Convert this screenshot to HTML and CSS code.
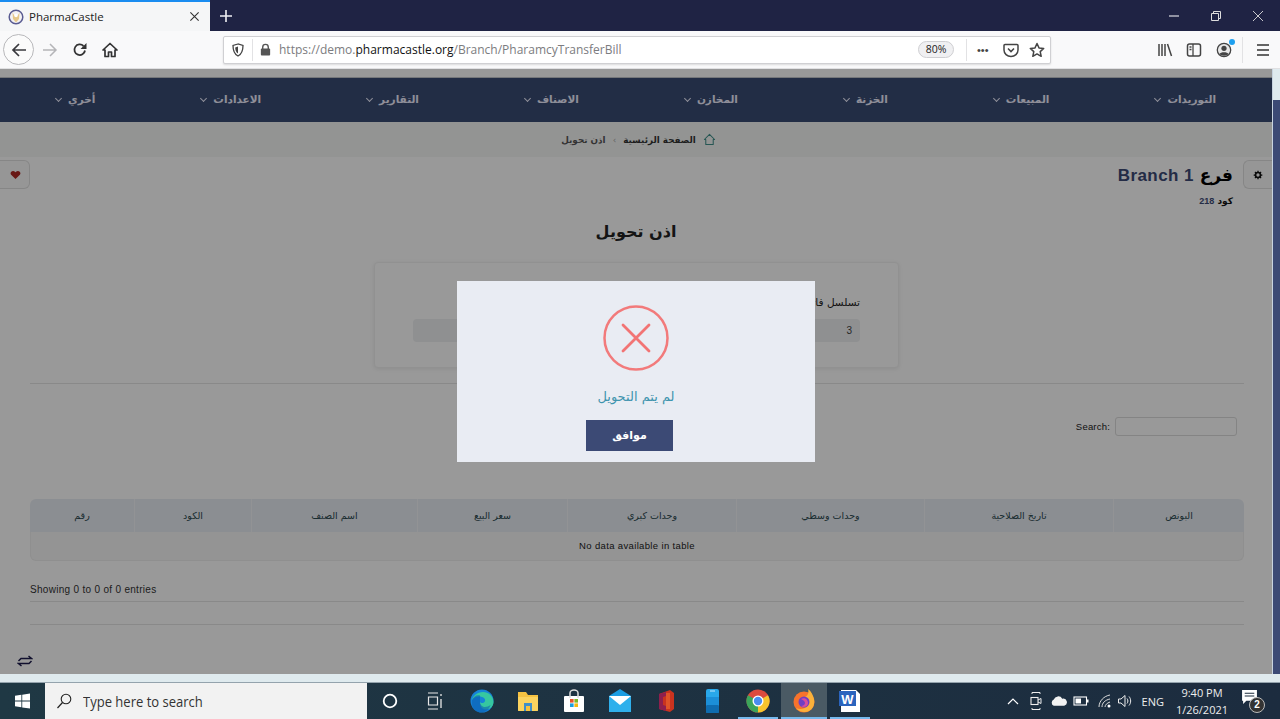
FILE: index.html
```html
<!DOCTYPE html>
<html lang="ar">
<head>
<meta charset="utf-8">
<title>PharmaCastle</title>
<link rel="stylesheet" href="styles.css">
</head>
<body>
<header class="tabbar">
  <div class="tab">
    <svg class="favicon" viewBox="0 0 16 16"><circle cx="8" cy="8" r="6.800" fill="#f4f2f4" stroke="#5a5c92" stroke-width="1.500"/><path d="M4.500 3.500 6 6h4l1.500-2.500-.5 6.500L8 13.500 5 10z" fill="#e6c88a"/><circle cx="8" cy="6.500" r="1.800" fill="#fff"/></svg>
    <span class="tab-title">PharmaCastle</span>
    <svg class="tab-close" viewBox="0 0 12 12"><path d="M1.500 1.500l9 9M10.500 1.500l-9 9" stroke="#333" stroke-width="1.200"/></svg>
  </div>
  <svg class="new-tab" viewBox="0 0 14 14"><path d="M7 1v12M1 7h12" stroke="#f0f0f4" stroke-width="1.600"/></svg>
  <div class="win-controls">
    <svg class="win-btn" viewBox="0 0 12 12"><path d="M1 6h10" stroke="#fff" stroke-width="1"/></svg>
    <svg class="win-btn" viewBox="0 0 12 12"><path d="M1.500 3.500h7v7h-7zM3.500 3.500v-2h7v7h-2" fill="none" stroke="#ddd" stroke-width="1"/></svg>
    <svg class="win-btn" viewBox="0 0 12 12"><path d="M1 1l10 10M11 1L1 11" stroke="#ddd" stroke-width=".9"/></svg>
  </div>
</header>

<nav class="toolbar">
  <div class="nav-buttons">
    <div class="back"><svg class="ico16" viewBox="0 0 16 16"><path d="M15 8H2M8 2 2 8l6 6" fill="none" stroke="#3a3a3e" stroke-width="1.700"/></svg></div>
    <svg class="ico16 forward" viewBox="0 0 16 16"><path d="M1 8h13M8 2l6 6-6 6" fill="none" stroke="#b5b5b8" stroke-width="1.500"/></svg>
    <svg class="ico16 reload" viewBox="0 0 16 16"><path d="M13 8.500A5.300 5.300 0 1 1 11.500 4" fill="none" stroke="#333" stroke-width="1.800"/><path d="M14.500 1v6h-6z" fill="#333"/></svg>
    <svg class="ico16 home" viewBox="0 0 16 16"><path d="M8 1.500 1 8h2v6.500h3.500V10h3v4.500H13V8h2z" fill="none" stroke="#333" stroke-width="1.700" stroke-linejoin="round"/></svg>
  </div>
  <div class="urlbar">
    <svg class="shield" viewBox="0 0 14 14"><path d="M7 1 2 2.500c0 5 1 8.500 5 10.500 4-2 5-5.500 5-10.500z" fill="none" stroke="#444" stroke-width="1.300"/><path d="M7 3.500v7c-2-1-2.800-3.500-2.800-6z" fill="#444"/></svg>
    <span class="url-sep"></span>
    <svg class="lock" viewBox="0 0 14 14"><path d="M4 6.500V4.500a3 3 0 0 1 6 0v2" fill="none" stroke="#555" stroke-width="1.500"/><rect x="2" y="6" width="10" height="7.500" rx="1" fill="#555"/></svg>
    <span class="url"><span class="url-dim">https://demo.</span><span class="url-host">pharmacastle.org</span><span class="url-dim">/Branch/PharamcyTransferBill</span></span>
    <span class="zoom-pill">80%</span>
    <span class="url-sep sep-wide"></span>
    <span class="dots">•••</span>
    <svg class="pocket" viewBox="0 0 16 16"><path d="M2 2.500h12a1 1 0 0 1 1 1V8a7 6.500 0 0 1-14 0V3.500a1 1 0 0 1 1-1z" fill="none" stroke="#444" stroke-width="1.500"/><path d="m5 6.500 3 3 3-3" fill="none" stroke="#444" stroke-width="1.600"/></svg>
    <svg class="star" viewBox="0 0 16 16"><path d="m8 1.500 2 4.400 4.700.5-3.500 3.200 1 4.700L8 11.900l-4.200 2.400 1-4.700-3.500-3.200 4.700-.5z" fill="none" stroke="#444" stroke-width="1.500" stroke-linejoin="round"/></svg>
  </div>
  <div class="tools">
    <svg class="ico16 t-lib" viewBox="0 0 16 16"><path d="M2 2v12M5 2v12M8 2v12M10.500 2l4 12" stroke="#444" stroke-width="1.500" fill="none"/></svg>
    <svg class="ico16 t-side" viewBox="0 0 16 16"><rect x="1.500" y="2" width="13" height="12" rx="2" fill="none" stroke="#444" stroke-width="1.500"/><path d="M7 2v12M3.500 5H5.500M3.500 7.500H5.500" stroke="#444" stroke-width="1.300"/></svg>
    <div class="t-avatar">
      <svg class="ico16" viewBox="0 0 16 16"><circle cx="8" cy="8" r="6.700" fill="#e8e8e8" stroke="#444" stroke-width="1.300"/><circle cx="8" cy="6.300" r="2.600" fill="#444"/><path d="M3.500 12c1-2.500 8-2.500 9 0-2 2.300-7 2.300-9 0z" fill="#444"/></svg>
      <span class="notif-dot"></span>
    </div>
    <span class="tool-sep"></span>
    <svg class="ico16 t-menu" viewBox="0 0 16 16"><path d="M2 3h12M2 8h12M2 13h12" stroke="#333" stroke-width="1.500"/></svg>
  </div>
</nav>

<div class="viewport">
  <main class="page" dir="rtl">
    <div class="menu">
      <span class="menu-item">التوريدات<i class="chev"></i></span>
      <span class="menu-item">المبيعات<i class="chev"></i></span>
      <span class="menu-item">الخزنة<i class="chev"></i></span>
      <span class="menu-item">المخازن<i class="chev"></i></span>
      <span class="menu-item">الاصناف<i class="chev"></i></span>
      <span class="menu-item">التقارير<i class="chev"></i></span>
      <span class="menu-item">الاعدادات<i class="chev"></i></span>
      <span class="menu-item">أخري<i class="chev"></i></span>
    </div>
    <div class="crumbs">
      <svg class="crumb-home" viewBox="0 0 14 14"><path d="M7 1.500 1.500 7H3v5.500h8V7h1.500z" fill="none" stroke="#3f8f8a" stroke-width="1.100" stroke-linejoin="round"/></svg>
      <span class="crumb-main">الصفحة الرئيسية</span>
      <span class="crumb-sep">›</span>
      <span class="crumb-cur">اذن تحويل</span>
    </div>
    <div class="head-row">
      <button class="gear-btn"><svg class="gear" viewBox="0 0 12 12"><circle cx="6" cy="6" r="3" fill="none" stroke="#111" stroke-width="2"/><path d="M6 .8v2M6 9.200v2M.8 6h2M9.200 6h2M2.300 2.300l1.400 1.400M8.300 8.300l1.400 1.400M9.700 2.300 8.300 3.700M3.700 8.300 2.300 9.700" stroke="#111" stroke-width="1.500"/></svg></button>
      <div class="branch">
        <h1 class="branch-title">فرع <span class="branch-name">Branch 1</span></h1>
        <div class="branch-code">كود <span class="code-num">218</span></div>
      </div>
      <button class="heart-btn"><svg class="heart" viewBox="0 0 12 12"><path d="M6 11 1.200 6.200C-.8 3.800 2.800.4 6 3.500 9.200.4 12.800 3.800 10.800 6.200z" fill="#b02a25"/></svg></button>
    </div>
    <h2 class="doc-title">اذن تحويل</h2>
    <section class="card">
      <div class="field">
        <label class="field-label">تسلسل فاتورة التحويل</label>
        <div class="field-input">3</div>
      </div>
      <div class="field">
        <label class="field-label">التاريخ</label>
        <div class="field-input"></div>
      </div>
    </section>
    <div class="content">
      <hr class="rule rule-first">
      <div class="search-row" dir="ltr">
        <label class="search-label">Search:</label>
        <span class="search-input"></span>
      </div>
      <table class="data">
        <colgroup>
          <col class="c1"><col class="c2"><col class="c3"><col class="c4"><col class="c5"><col class="c6"><col class="c7"><col class="c8">
        </colgroup>
        <thead>
          <tr><th>البونص</th><th>تاريخ الصلاحية</th><th>وحدات وسطي</th><th>وحدات كبري</th><th>سعر البيع</th><th>اسم الصنف</th><th>الكود</th><th>رقم</th></tr>
        </thead>
        <tbody>
          <tr><td colspan="8" dir="ltr">No data available in table</td></tr>
        </tbody>
      </table>
      <div class="info" dir="ltr">Showing 0 to 0 of 0 entries</div>
      <hr class="rule rule-a">
      <hr class="rule rule-b">
      <div class="foot-icon" dir="ltr">
        <svg class="swap" viewBox="0 0 16 12"><path d="M1.500 6 4 3.500h10.500L11.500 1M14.500 6 12 8.500H1.500L4.500 11" fill="none" stroke="#1d1c4d" stroke-width="1.500"/></svg>
      </div>
    </div>
    <div class="overlay">
      <div class="modal">
        <svg class="err" viewBox="0 0 66 66"><circle cx="33" cy="33" r="31.500" fill="none" stroke="#f27474" stroke-width="2.500" opacity=".95"/><path d="M20 20l26 26M46 20 20 46" stroke="#f27474" stroke-width="2.800" stroke-linecap="round"/></svg>
        <p class="modal-text">لم يتم التحويل</p>
        <button class="modal-btn">موافق</button>
      </div>
    </div>
  </main>
  <aside class="scrollbar"><div class="thumb"></div></aside>
</div>

<div class="strip"></div>

<footer class="taskbar">
  <div class="start"><svg class="winlogo" viewBox="0 0 16 16"><path d="M0 2.300 6.800 1.300V7.500H0zM7.700 1.200 16 0v7.500H7.700zM0 8.400h6.800v6.300L0 13.700zM7.700 8.400H16V16l-8.300-1.200z" fill="#fff"/></svg></div>
  <div class="searchbox">
    <svg class="mag" viewBox="0 0 16 16"><circle cx="10" cy="6" r="4.800" fill="none" stroke="#222" stroke-width="1.100"/><path d="M6.500 9.500 1.500 15" stroke="#222" stroke-width="1.200"/></svg>
    <span class="search-ph">Type here to search</span>
  </div>
  <div class="task-icon"><svg class="ti" viewBox="0 0 22 22"><circle cx="11" cy="11" r="6.300" fill="none" stroke="#fff" stroke-width="1.800"/></svg></div>
  <div class="task-icon taskview"><svg class="ti" viewBox="0 0 22 22"><path d="M5 3h10M5 19h10M5.500 7h9v8h-9z" fill="none" stroke="#e8e8e8" stroke-width="1.200"/><path d="M18 4v2M18 9v9" stroke="#e8e8e8" stroke-width="1.300"/></svg></div>
  <div class="task-icon"><svg class="tl" viewBox="0 0 24 24"><circle cx="12" cy="12" r="11.500" fill="#1683d8"/><path d="M23.500 13c0-6-5-10-10.500-10C7 3 3 7 2 11c3-4 9-4.500 12-2 1.500 1.200 1.500 3.500 0 4.500-2 1-4 .5-4-1-.5 4 1.500 8 6 8 4 0 7.500-3 7.500-7.500z" fill="#36c7a0"/><path d="M10 12.500c0 3 2 5.500 5 5.500 2 0 4-.7 5.500-2-1 4-5 7.500-9.500 7.500-6 0-10-5-9-12 1-4 5-6 8-5" fill="#0c5fb0" opacity=".6"/></svg></div>
  <div class="task-icon"><svg class="tl" viewBox="0 0 24 24"><path d="M2 3h8l2 3h10v15a1 1 0 0 1-1 1H3a1 1 0 0 1-1-1z" fill="#f5c242"/><path d="M2 8h20v13a1 1 0 0 1-1 1H3a1 1 0 0 1-1-1z" fill="#fbd35f"/><rect x="8" y="14" width="8" height="8" fill="#3f8fc9"/><rect x="10" y="17" width="4" height="5" fill="#f5c242"/></svg></div>
  <div class="task-icon"><svg class="tl" viewBox="0 0 24 24"><rect x="2" y="7" width="20" height="16" rx="1" fill="#fff"/><path d="M8 9V4a4 3 0 0 1 8 0v5" fill="none" stroke="#ddd" stroke-width="1.500"/><rect x="8" y="10" width="3.600" height="3.600" fill="#e8542c"/><rect x="12.400" y="10" width="3.600" height="3.600" fill="#7db928"/><rect x="8" y="14.400" width="3.600" height="3.600" fill="#1c9fe0"/><rect x="12.400" y="14.400" width="3.600" height="3.600" fill="#f7b90f"/></svg></div>
  <div class="task-icon"><svg class="tl" viewBox="0 0 24 24"><path d="M1 7 12 0l11 7v16H1z" fill="#1b9de2"/><path d="M1 7h22v16H1z" fill="#2fb0ec"/><path d="M1 7l11 9 11-9z" fill="#fff"/></svg></div>
  <div class="task-icon"><svg class="tl" viewBox="0 0 24 24"><path d="M5 5 16 1l4 3v16l-4 3-11-3z" fill="#c9331f"/><path d="M5 5l7-2v4L9 8v8l3 1v5l-7-2z" fill="#8e1f4d"/><path d="M12 4h4v16h-4z" fill="#e8612c" opacity=".7"/></svg></div>
  <div class="task-icon"><svg class="tl" viewBox="0 0 24 24"><rect x="6" y="0" width="13" height="24" rx="2" fill="#29a8ea"/><rect x="6" y="16" width="13" height="8" rx="1" fill="#0f6cb0"/><rect x="6" y="8" width="13" height="8" fill="#1c8fd8"/><rect x="10" y="1.500" width="5" height="1" fill="#bfe6fb"/></svg></div>
  <div class="task-icon running"><svg class="tl" viewBox="0 0 24 24"><circle cx="12" cy="12" r="11.500" fill="#dd4b3e"/><path d="M12 12 22 6.200A11.500 11.500 0 0 1 12 23.500z" fill="#f7c42e"/><path d="M12 12 12 23.500A11.500 11.500 0 0 1 2 6.200z" fill="#3ba55a"/><circle cx="12" cy="12" r="5.500" fill="#fff"/><circle cx="12" cy="12" r="4.200" fill="#4a8df0"/></svg></div>
  <div class="task-icon running active"><svg class="tl" viewBox="0 0 24 24"><circle cx="12" cy="13" r="10.500" fill="#f7732c"/><path d="M22 10c1 5-1 10-5 12-4 2-10 1-13-3 4 2 9 1 11-2 2-3 1-7-2-9 3-1 4-5 3-8 3 2 5 6 6 10z" fill="#fbb13a"/><circle cx="12" cy="13" r="5.500" fill="#6e3fc4"/><path d="M9 10c3-2 7 0 7 4s-5 5-7 3c2 0 4-1 4-3s-2-3-4-4z" fill="#d84d9c"/></svg></div>
  <div class="task-icon running"><svg class="tl" viewBox="0 0 24 24"><path d="M3 1h15l4 4v18H3z" fill="#fff"/><rect x="1" y="2" width="17" height="15" fill="#2b64bd"/><text class="word-w" x="9.500" y="14.500" text-anchor="middle">W</text></svg></div>
  <div class="tray">
    <svg class="i-chev" viewBox="0 0 14 14"><path d="m2 10 5-5 5 5" fill="none" stroke="#fff" stroke-width="1.200"/></svg>
    <svg class="i-meet" viewBox="0 0 14 20"><path d="M3 3V1.500h8V3M3 17v1.500h8V17" fill="none" stroke="#eee" stroke-width="1"/><rect x="2" y="6.500" width="7" height="7" fill="none" stroke="#eee" stroke-width="1.100"/><path d="m9 9 3-1.500v5L9 11" fill="none" stroke="#eee"/></svg>
    <svg class="i-cloud" viewBox="0 0 18 12"><path d="M4 11a3.500 3.500 0 0 1 0-6.500A5 5 0 0 1 13 3.500 3.800 3.800 0 0 1 15 11z" fill="#f2f2f2"/></svg>
    <svg class="i-batt" viewBox="0 0 16 12"><rect x="1" y="2" width="12.500" height="8" fill="none" stroke="#fff" stroke-width="1.100"/><rect x="2.500" y="3.500" width="5.500" height="5" fill="#fff"/><rect x="14" y="4.500" width="1.500" height="3" fill="#fff"/></svg>
    <svg class="i-wifi" viewBox="0 0 16 16"><path d="M2 14C2 8 7 3 13 2M5 14c0-4 3-7 8-8M8 14c0-2 2-4 5-5" fill="none" stroke="#ddd" stroke-width="1"/><circle cx="12" cy="13" r="1.500" fill="#fff"/></svg>
    <svg class="i-vol" viewBox="0 0 16 16"><path d="M1.500 6v4H4l4 3.500v-11L4 6z" fill="none" stroke="#eee"/><path d="M10 5.500c1.200 1.500 1.200 3.500 0 5M12 3.500c2.200 2.500 2.200 6.500 0 9" fill="none" stroke="#eee"/></svg>
    <span class="lang">ENG</span>
    <div class="clock"><span>9:40 PM</span><span>1/26/2021</span></div>
    <div class="notif">
      <svg class="notif-ico" viewBox="0 0 16 16"><path d="M1 1h14v10H5l-3 3v-3H1z" fill="#fff"/><path d="M3.500 4h9M3.500 6.500h9" stroke="#1c2c3c"/></svg>
      <span class="notif-badge">2</span>
    </div>
  </div>
</footer>
</body>
</html>
```

FILE: styles.css
```css
* { box-sizing: border-box; }
html, body { margin: 0; padding: 0; }
body {
  width: 1280px;
  height: 719px;
  overflow: hidden;
  display: flex;
  flex-direction: column;
  font-family: "DejaVu Sans", "Liberation Sans", sans-serif;
  background: #fff;
}
svg { display: block; flex: none; }

/* Browser chrome */
.tabbar { height: 31px; flex: none; display: flex; align-items: center; background: #1f2344; }
.tab {
  width: 210px; height: 31px; background: #f5f6f7; border-top: 2px solid #1a8cf0;
  display: flex; align-items: center; padding: 0 10px 0 8px;
}
.favicon { width: 16px; height: 16px; }
.tab-title { font: 11.500px "Open Sans", sans-serif; color: #222; margin-left: 5px; flex: 1; }
.tab-close { width: 11px; height: 11px; }
.new-tab { width: 14px; height: 14px; margin-left: 9px; }
.win-controls { margin-left: auto; display: flex; gap: 30px; padding-right: 16px; }
.win-btn { width: 12px; height: 12px; }

.toolbar { height: 38px; flex: none; background: #f9f9fa; display: flex; align-items: center; border-bottom: 1px solid #e0e0e2; }
.nav-buttons { display: flex; align-items: center; width: 223px; padding-left: 3px; flex: none; }
.back {
  width: 31px; height: 31px; border-radius: 50%; border: 1px solid #b8b8bb; background: #fbfbfb;
  display: flex; align-items: center; justify-content: center;
}
.ico16 { width: 16px; height: 16px; }
.forward { margin-left: 8px; }
.reload { margin-left: 14px; }
.home { margin-left: 14px; }
.urlbar {
  width: 828px; height: 28px; background: #fff; border: 1px solid #d0d0d3; border-radius: 2px;
  display: flex; align-items: center; padding: 0 5px 0 7px; box-shadow: 0 1px 2px rgba(0,0,0,.12);
}
.shield { width: 14px; height: 14px; }
.url-sep { width: 1px; height: 22px; background: #e2e2e4; margin-left: 7px; }
.lock { width: 13px; height: 13px; margin-left: 6px; }
.url { font: 12px "Open Sans", sans-serif; margin-left: 7px; flex: 1; white-space: nowrap; }
.url-dim { color: #7c7c80; }
.url-host { color: #111; }
.zoom-pill {
  width: 36px; height: 17px; border: 1px solid #cfcfd2; border-radius: 9px; background: #f0f0f2;
  font: 10.500px/15px "Open Sans", sans-serif; color: #222; text-align: center;
}
.sep-wide { margin-left: 12px; }
.dots { font: 11px "Liberation Sans", sans-serif; color: #444; margin-left: 10px; width: 19px; white-space: nowrap; }
.pocket { width: 16px; height: 16px; margin-left: 7px; }
.star { width: 16px; height: 16px; margin-left: 10px; }
.tools { display: flex; align-items: center; margin-left: 106px; }
.t-side { margin-left: 13px; }
.t-avatar { position: relative; margin-left: 14px; }
.notif-dot { position: absolute; right: -3px; top: -3px; width: 6px; height: 6px; border-radius: 50%; background: #1ea0f0; }
.tool-sep { width: 1px; height: 26px; background: #e2e2e4; margin-left: 10px; }
.t-menu { margin-left: 12px; }

/* Page */
.viewport { height: 605px; flex: none; display: flex; }
.page { width: 1272px; height: 605px; position: relative; overflow: hidden; background: #fff; padding-top: 8px; }
.scrollbar { width: 8px; background: #dfeaee; padding-top: 31px; border-left: 1px solid #c8d4e0; }
.thumb { height: 574px; background: #3c4a75; }

.menu {
  height: 45px; background: #394b73; display: flex; justify-content: space-between; align-items: center;
  padding: 0 56px 2px; border-top: 1px solid #c3c6cc;
}
.menu-item { font-size: 10.500px; font-weight: 700; color: #eef; white-space: nowrap; display: flex; align-items: center; gap: 5px; }
.chev { width: 5px; height: 5px; border-right: 1.500px solid #eef; border-bottom: 1.500px solid #eef; transform: rotate(45deg); margin-top: -2px; margin-right: 2px; }

.crumbs { height: 35px; background: #f5f7f5; display: flex; align-items: center; justify-content: center; font-size: 8.800px; padding-left: 5px; }
.crumb-home { width: 13px; height: 13px; margin-left: 7px; }
.crumb-main { font-weight: 700; color: #333; }
.crumb-sep { color: #aaa; margin: 0 7px; }
.crumb-cur { color: #555; font-weight: 700; }

.head-row { display: flex; align-items: flex-start; height: 60px; padding-top: 3px; }
.gear-btn {
  width: 29px; height: 29px; padding: 0; background: #fafafa; border: 1px solid #e0e0e0; border-right: 0;
  border-radius: 6px 0 0 6px; display: flex; align-items: center; justify-content: center;
}
.gear { width: 10px; height: 10px; }
.branch { margin-right: 10px; flex: 1; }
.branch-title { margin: 2px 0 0; font-size: 17px; line-height: 26px; font-weight: 700; color: #000; }
.branch-name { font-family: "Liberation Sans", sans-serif; color: #3c4a75; letter-spacing: .4px; }
.branch-code { font-size: 9px; font-weight: 700; margin-top: 7px; color: #111; }
.code-num { color: #3c4a75; font-family: "Liberation Sans", sans-serif; }
.heart-btn {
  width: 30px; height: 29px; padding: 0 0 0 2px; background: #fafafa; border: 1px solid #e0e0e0; border-left: 0;
  border-radius: 0 6px 6px 0; display: flex; align-items: center; justify-content: center;
}
.heart { width: 11px; height: 11px; }

.doc-title { margin: 0; height: 30px; font-size: 16px; line-height: 30px; text-align: center; font-weight: 700; color: #222; }

.card {
  margin: 15px 373px 0 0; width: 525px; height: 106px; background: #fff; border: 1px solid #f2f2f2; border-radius: 4px;
  box-shadow: 0 1px 4px rgba(0,0,0,.08); padding: 30px 38px 0; display: grid; grid-template-columns: 1fr 1fr; gap: 20px;
}
.field-label { display: block; font-size: 10.500px; line-height: 18px; color: #222; }
.field-input { height: 23px; margin-top: 8px; background: #eef0f2; border-radius: 4px; padding: 0 8px; font: 10px/23px "Liberation Sans", sans-serif; color: #444; }

.content { padding: 0 28px 0 30px; }
.rule { border: 0; border-top: 1px solid #e4e4e4; margin: 0; }
.rule-first { margin-top: 15px; }
.search-row { display: flex; justify-content: flex-end; align-items: center; margin-top: 33px; padding-right: 7px; height: 19px; }
.search-label { font: 9.500px "Liberation Sans", sans-serif; letter-spacing: .2px; color: #222; margin-right: 5px; }
.search-input { width: 122px; height: 19px; border: 1px solid #dcdcdc; border-radius: 3px; background: #fff; }
.data { width: 1214px; margin-top: 63px; table-layout: fixed; border-collapse: separate; border-spacing: 0; }
.c1 { width: 131px; } .c2 { width: 189px; } .c3 { width: 188px; } .c4 { width: 169px; }
.c5 { width: 150px; } .c6 { width: 166px; } .c7 { width: 117px; } .c8 { width: 104px; }
.data th {
  height: 33px; padding: 0; background: #e8edf4; font-size: 9.500px; font-weight: 400; color: #2c4a50;
  border-left: 1px solid #f4f5f8; text-align: center;
}
.data th:first-child { border-radius: 0 6px 0 0; }
.data th:last-child { border-radius: 6px 0 0 0; border-left: 0; }
.data td {
  height: 29px; padding: 0 0 2px; background: #f7f7f7; font: 9.500px "Liberation Sans", sans-serif; letter-spacing: .35px; text-align: center; color: #222;
  border-radius: 0 0 6px 6px; border: 1px solid #eee; border-top: 0;
}
.info { font: 10px/16px "Liberation Sans", sans-serif; letter-spacing: .3px; color: #333; margin-top: 21px; }
.rule-a { margin-top: 3px; }
.rule-b { margin-top: 22px; }
.foot-icon { margin-top: 30px; margin-left: -13px; }
.swap { width: 16px; height: 12px; }

.overlay { position: absolute; inset: 0; background: rgba(0,0,0,.4); display: flex; align-items: flex-start; justify-content: flex-start; }
.modal {
  width: 358px; height: 181px; background: #e9ecf3; margin: 212px 457px 0 0;
  display: flex; flex-direction: column; align-items: center; padding-top: 24px;
}
.err { width: 66px; height: 66px; }
.modal-text { margin: 16px 0 0; font-size: 13px; line-height: 20px; color: #3f94ae; }
.modal-btn {
  margin: 13px 13px 0 0; width: 87px; height: 31px; border: 0; padding: 0; background: #3c4a75; color: #fff;
  font: 700 11px "DejaVu Sans", sans-serif;
}

/* Taskbar */
.strip { height: 8px; flex: none; background: #dfeaee; }
.taskbar { height: 37px; flex: none; display: flex; align-items: stretch; background: linear-gradient(90deg, #1f3844, #1c2c3f); border-top: 1px solid #94a3ad; }
.start { width: 45px; display: flex; align-items: center; justify-content: center; }
.winlogo { width: 15px; height: 16px; }
.searchbox { width: 322px; background: #f2f2f2; display: flex; align-items: center; padding-left: 11px; }
.mag { width: 16px; height: 16px; }
.search-ph { font: 14px "Open Sans", sans-serif; color: #333; margin-left: 11px; transform: scaleX(.93); transform-origin: left; }
.task-icon { width: 46px; display: flex; align-items: center; justify-content: center; position: relative; }
.taskview { padding-right: 4px; }
.ti { width: 22px; height: 22px; }
.tl { width: 24px; height: 24px; }
.running::after { content: ""; position: absolute; left: 3px; right: 3px; bottom: 0; height: 2px; background: #76b9ed; }
.active { background: #4a5a64; }
.active::after { left: 0; right: 0; }
.word-w { font: 700 13px "Liberation Sans", sans-serif; fill: #fff; }
.tray { margin-left: auto; display: flex; align-items: center; color: #eee; padding-right: 15px; }
.i-chev { width: 14px; height: 14px; margin-right: 9px; }
.i-meet { width: 14px; height: 20px; margin-right: 7px; }
.i-cloud { width: 17px; height: 12px; margin-right: 6px; }
.i-batt { width: 16px; height: 12px; margin-right: 8px; }
.i-wifi { width: 16px; height: 16px; margin-right: 4px; }
.i-vol { width: 16px; height: 16px; margin-right: 9px; }
.lang { font: 11px "Open Sans", sans-serif; }
.clock { display: flex; flex-direction: column; align-items: center; font: 11px/17px "Open Sans", sans-serif; margin-left: 10px; width: 56px; }
.notif { position: relative; margin-left: 11px; width: 24px; height: 24px; }
.notif-ico { width: 17px; height: 17px; }
.notif-badge {
  position: absolute; right: 0; bottom: 0; width: 16px; height: 16px; border-radius: 50%; background: #333; border: 1px solid #bbb;
  font: 700 10px/14px "Liberation Sans", sans-serif; text-align: center; color: #fff;
}
```
